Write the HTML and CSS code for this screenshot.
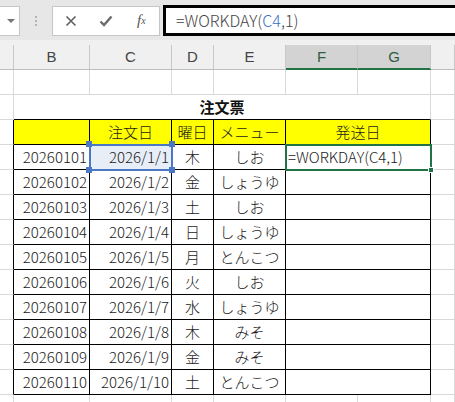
FILE: index.html
```html
<!DOCTYPE html>
<html lang="ja">

<head>
    <meta charset="UTF-8">
    <meta name="viewport" content="width=device-width, initial-scale=1.0">
    <title>注文票</title>
    <link rel="stylesheet" href="styles.css">
</head>

<body>

    <!-- Formula bar -->
    <div class="formula-bar">
        <div class="name-box"><span class="caret"></span></div>
        <div class="grip"><span></span><span></span><span></span></div>
        <div class="bar-buttons">
            <div class="bar-btn">
                <svg width="12" height="12" viewBox="0 0 12 12">
                    <path d="M1.5 1.5 L10.5 10.5 M10.5 1.5 L1.5 10.5" stroke="#5f5f5f" stroke-width="1.6" fill="none" />
                </svg>
            </div>
            <div class="bar-btn">
                <svg width="14" height="12" viewBox="0 0 14 12">
                    <path d="M1.5 6.5 L5 10 L12.5 1.5" stroke="#6b6b6b" stroke-width="2.4" fill="none" />
                </svg>
            </div>
            <div class="bar-btn fx">f<sub>x</sub></div>
        </div>
        <div class="formula-input">=WORKDAY(<span class="ref">C4</span>,1)</div>
    </div>

    <!-- Sheet -->
    <div class="sheet">
        <div class="row col-heads">
            <div class="cell"></div>
            <div class="cell">B</div>
            <div class="cell">C</div>
            <div class="cell">D</div>
            <div class="cell">E</div>
            <div class="cell picked">F</div>
            <div class="cell picked">G</div>
            <div class="cell"></div>
        </div>

        <div class="row">
            <div class="cell"></div>
            <div class="cell"></div>
            <div class="cell"></div>
            <div class="cell"></div>
            <div class="cell"></div>
            <div class="cell"></div>
            <div class="cell"></div>
            <div class="cell"></div>
        </div>

        <div class="row">
            <div class="cell"></div>
            <div class="cell title">注文票</div>
            <div class="cell"></div>
        </div>

        <div class="row head">
            <div class="cell edge"></div>
            <div class="cell t"></div>
            <div class="cell t mid">注文日</div>
            <div class="cell t mid">曜日</div>
            <div class="cell t mid">メニュー</div>
            <div class="cell t mid span2">発送日</div>
            <div class="cell"></div>
        </div>

        <div class="row">
            <div class="cell edge"></div>
            <div class="cell t num">20260101</div>
            <div class="cell t num active">2026/1/1
                <span class="handle tl"></span><span class="handle tr"></span>
                <span class="handle bl"></span><span class="handle br"></span>
            </div>
            <div class="cell t mid">木</div>
            <div class="cell t mid">しお</div>
            <div class="cell t span2 editing">=WORKDAY(C4,1)<span class="fill-handle"></span></div>
            <div class="cell"></div>
        </div>

        <div class="row">
            <div class="cell edge"></div>
            <div class="cell t num">20260102</div>
            <div class="cell t num">2026/1/2</div>
            <div class="cell t mid">金</div>
            <div class="cell t mid">しょうゆ</div>
            <div class="cell t span2"></div>
            <div class="cell"></div>
        </div>

        <div class="row">
            <div class="cell edge"></div>
            <div class="cell t num">20260103</div>
            <div class="cell t num">2026/1/3</div>
            <div class="cell t mid">土</div>
            <div class="cell t mid">しお</div>
            <div class="cell t span2"></div>
            <div class="cell"></div>
        </div>

        <div class="row">
            <div class="cell edge"></div>
            <div class="cell t num">20260104</div>
            <div class="cell t num">2026/1/4</div>
            <div class="cell t mid">日</div>
            <div class="cell t mid">しょうゆ</div>
            <div class="cell t span2"></div>
            <div class="cell"></div>
        </div>

        <div class="row">
            <div class="cell edge"></div>
            <div class="cell t num">20260105</div>
            <div class="cell t num">2026/1/5</div>
            <div class="cell t mid">月</div>
            <div class="cell t mid">とんこつ</div>
            <div class="cell t span2"></div>
            <div class="cell"></div>
        </div>

        <div class="row">
            <div class="cell edge"></div>
            <div class="cell t num">20260106</div>
            <div class="cell t num">2026/1/6</div>
            <div class="cell t mid">火</div>
            <div class="cell t mid">しお</div>
            <div class="cell t span2"></div>
            <div class="cell"></div>
        </div>

        <div class="row">
            <div class="cell edge"></div>
            <div class="cell t num">20260107</div>
            <div class="cell t num">2026/1/7</div>
            <div class="cell t mid">水</div>
            <div class="cell t mid">しょうゆ</div>
            <div class="cell t span2"></div>
            <div class="cell"></div>
        </div>

        <div class="row">
            <div class="cell edge"></div>
            <div class="cell t num">20260108</div>
            <div class="cell t num">2026/1/8</div>
            <div class="cell t mid">木</div>
            <div class="cell t mid">みそ</div>
            <div class="cell t span2"></div>
            <div class="cell"></div>
        </div>

        <div class="row">
            <div class="cell edge"></div>
            <div class="cell t num">20260109</div>
            <div class="cell t num">2026/1/9</div>
            <div class="cell t mid">金</div>
            <div class="cell t mid">みそ</div>
            <div class="cell t span2"></div>
            <div class="cell"></div>
        </div>

        <div class="row">
            <div class="cell edge"></div>
            <div class="cell t num">20260110</div>
            <div class="cell t num">2026/1/10</div>
            <div class="cell t mid">土</div>
            <div class="cell t mid">とんこつ</div>
            <div class="cell t span2"></div>
            <div class="cell"></div>
        </div>

        <div class="row">
            <div class="cell"></div>
            <div class="cell"></div>
            <div class="cell"></div>
            <div class="cell"></div>
            <div class="cell"></div>
            <div class="cell"></div>
            <div class="cell"></div>
            <div class="cell"></div>
        </div>
    </div>

</body>

</html>
```

FILE: styles.css
```css
* {
    margin: 0;
    padding: 0;
    box-sizing: border-box;
}

body {
    background-color: #fff;
    font-family: "Noto Sans CJK JP", "Noto Sans", sans-serif;
    font-weight: 300;
    color: #1a1a1a;
    overflow: hidden;
}

/* Formula bar */
.formula-bar {
    display: flex;
    align-items: center;
    height: 40px;
    padding: 5px 0 4px 0;
    background-color: #e7e7e7;
}

.name-box {
    width: 20px;
    height: 30px;
    background: #fff;
    border: 1px solid #c6c6c6;
    border-left: none;
    display: flex;
    align-items: center;
    justify-content: center;
}

.caret {
    width: 0;
    height: 0;
    border-left: 4px solid transparent;
    border-right: 4px solid transparent;
    border-top: 4px solid #777;
    margin-left: 2px;
}

.grip {
    width: 32px;
    display: flex;
    flex-direction: column;
    align-items: center;
    gap: 2px;
}

.grip span {
    width: 2px;
    height: 2px;
    background: #b4b4b4;
}

.bar-buttons {
    display: flex;
    width: 108px;
    height: 30px;
    background: #fff;
    border: 1px solid #c6c6c6;
}

.bar-btn {
    flex: 1;
    display: flex;
    align-items: center;
    justify-content: center;
}

.fx {
    font-family: "Liberation Serif", serif;
    font-style: italic;
    font-weight: normal;
    font-size: 15px;
    color: #555;
}

.fx sub {
    font-size: 10px;
    vertical-align: 0;
}

.formula-input {
    flex: 1;
    height: 31px;
    margin-left: 3px;
    background: #fff;
    border: 3px solid #000;
    border-right: none;
    padding-left: 10px;
    font-size: 16px;
    line-height: 25px;
    color: #444;
}

.ref {
    color: #3a6fc4;
}

/* Grid */
.sheet {
    background: #fff;
}

.row {
    display: grid;
    grid-template-columns: 14px 76px 82px 42px 72px 72px 73px 1fr;
    height: 25px;
}

.cell {
    border-right: 1px solid #d9d9d9;
    border-bottom: 1px solid #d9d9d9;
    font-size: 15px;
    line-height: 24px;
    white-space: nowrap;
    overflow: hidden;
    position: relative;
}

/* Column letters */
.col-heads {
    height: 30px;
    padding-top: 5px;
    background: #f0f0f0;
}

.col-heads .cell {
    border-right-color: #c8c8c8;
    border-bottom-color: #bdbdbd;
    text-align: center;
    font-family: "Liberation Sans", sans-serif;
    font-weight: normal;
    font-size: 15px;
    color: #444;
}

.col-heads .cell.picked {
    background: #d3d3d3;
    color: #2d5c40;
    border-bottom: 2px solid #217346;
}

/* Table */
.title {
    grid-column: 2 / 8;
    text-align: center;
    font-weight: bold;
    border-bottom-color: #000;
    color: #111;
}

.edge {
    border-right-color: #000;
}

.t {
    border-right-color: #000;
    border-bottom-color: #000;
}

.head .t {
    background: #ffff00;
}

.span2 {
    grid-column: span 2;
}

.num {
    text-align: right;
    padding-right: 2px;
}

.mid {
    text-align: center;
}

/* Selection */
.active {
    background: #e8eef8;
    outline: 2px solid #4a78c4;
    outline-offset: -1px;
    overflow: visible;
    z-index: 2;
}

.handle {
    position: absolute;
    width: 6px;
    height: 6px;
    background: #4a78c4;
}

.handle.tl { left: -4px; top: -4px; }
.handle.tr { right: -4px; top: -4px; }
.handle.bl { left: -4px; bottom: -4px; }
.handle.br { right: -4px; bottom: -4px; }

.editing {
    outline: 2px solid #217346;
    outline-offset: -1px;
    overflow: visible;
    padding-left: 2px;
    z-index: 1;
}

.fill-handle {
    position: absolute;
    right: -4px;
    bottom: -4px;
    width: 6px;
    height: 6px;
    background: #217346;
    border: 1px solid #fff;
}
```
